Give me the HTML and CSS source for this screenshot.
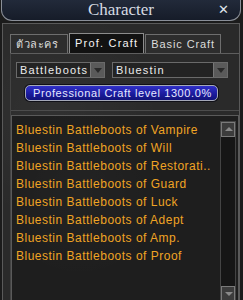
FILE: index.html
```html
<!DOCTYPE html>
<html lang="en">
<head>
  <meta charset="UTF-8" />
  <meta name="viewport" content="width=device-width, initial-scale=1" />
  <title>Character</title>
  <link rel="stylesheet" href="styles.css">
</head>
<body>
  <div class="window">
    <div class="titlebar">
      <span class="title">Character</span>
      <span class="close">&#x2715;</span>
    </div>

    <div class="frame">
      <div class="tabs">
        <div class="tab">ตัวละคร</div>
        <div class="tab active">Prof. Craft</div>
        <div class="tab">Basic Craft</div>
      </div>

      <div class="pane">
        <div class="selects">
          <div class="select small">
            <span>Battleboots</span>
            <span class="arrow"></span>
          </div>
          <div class="select wide">
            <span>Bluestin</span>
            <span class="arrow"></span>
          </div>
        </div>

        <div class="level">
          <span>Professional Craft level 1300.0%</span>
        </div>

        <div class="sep"></div>

        <div class="listbox">
          <ul class="items">
            <li>Bluestin Battleboots of Vampire</li>
            <li>Bluestin Battleboots of Will</li>
            <li>Bluestin Battleboots of Restorati..</li>
            <li>Bluestin Battleboots of Guard</li>
            <li>Bluestin Battleboots of Luck</li>
            <li>Bluestin Battleboots of Adept</li>
            <li>Bluestin Battleboots of Amp.</li>
            <li>Bluestin Battleboots of Proof</li>
          </ul>
          <div class="scrollbar">
            <div class="sbtn up"></div>
            <div class="track"></div>
            <div class="sbtn down"></div>
          </div>
        </div>
      </div>
    </div>
  </div>
</body>
</html>
```

FILE: styles.css
```css
body {
  margin: 0;
  background: #141414;
  font-family: 'Liberation Sans', Arial, sans-serif;
}
.window {
  width: 243px;
  height: 300px;
  overflow: hidden;
  background: #1b1b1b;
}
.titlebar {
  position: relative;
  height: 20px;
  margin: 0 2px 0 1px;
  border: 1px solid #8a8f98;
  border-top: none;
  border-radius: 0 0 11px 11px;
  background: linear-gradient(#222a3a, #161c29);
  display: flex;
  justify-content: center;
  align-items: center;
}
.title {
  font-family: 'Liberation Serif', 'Times New Roman', serif;
  font-size: 17px;
  color: #d6dbe2;
}
.close {
  position: absolute;
  right: 11px;
  top: 2px;
  font-size: 13px;
  color: #dfe3ea;
  font-family: 'DejaVu Sans', sans-serif;
}
.frame {
  margin: 2px 3px 0 2px;
  height: 280px;
  border: 1px solid #5a5a5a;
  border-bottom: none;
  background:
    radial-gradient(circle at 20% 30%, rgba(255,255,255,0.03), transparent 40%),
    radial-gradient(circle at 80% 70%, rgba(255,255,255,0.03), transparent 40%),
    #2a2a2a;
  padding-top: 9px;
}
.tabs {
  display: flex;
  gap: 1px;
  padding-left: 7px;
  align-items: flex-end;
}
.tab {
  height: 18px;
  padding: 0 5px;
  border: 1px solid #6e6e6e;
  border-bottom: none;
  background: #2d2d2d;
  color: #dcdcdc;
  font-size: 11px;
  letter-spacing: 0.9px;
  line-height: 19px;
}
.tab:first-child {
  width: 46px;
  letter-spacing: 0.5px;
}
.tab.active {
  height: 19px;
  background: #121212;
  border-color: #8c8c8c;
  color: #f4f4f4;
  letter-spacing: 1.2px;
}
.pane {
  margin: 0 0 0 7px;
  border-top: 1px solid #5e5e5e;
  border-left: 1px solid #444;
}
.selects {
  display: flex;
  gap: 7px;
  padding: 8px 0 0 5px;
}
.select {
  height: 14px;
  border: 1px solid #6a6a6a;
  background: #232323;
  color: #ececec;
  font-size: 11px;
  letter-spacing: 1.2px;
  line-height: 15px;
  padding-left: 3px;
  display: flex;
  justify-content: space-between;
}
.select.small { width: 84px; }
.select.wide { width: 111px; }
.arrow {
  width: 13px;
  height: 14px;
  background: #5a5a5a;
  border-left: 1px solid #777;
  position: relative;
}
.arrow::after {
  content: "";
  position: absolute;
  left: 3px;
  top: 5px;
  border-left: 4px solid transparent;
  border-right: 4px solid transparent;
  border-top: 5px solid #2a2a2a;
}
.level {
  margin: 7px 0 0 14px;
  width: 184px;
  height: 14px;
  border: 1px solid #a4a8b8;
  border-radius: 5px;
  background: linear-gradient(#3030c8, #1a1a9a 60%, #12127a);
  box-shadow: 0 0 0 1px #101018;
  color: #e6e8ff;
  font-size: 11px;
  letter-spacing: 0.6px;
  line-height: 15px;
  padding-left: 7px;
  white-space: nowrap;
  overflow: hidden;
}
.sep {
  margin: 9px 0 0 0;
  border-top: 1px solid #4c4c4c;
}
.listbox {
  margin: 4px 0 0 0;
  height: 190px;
  border: 1px solid #5a5a5a;
  border-bottom: none;
  background:
    radial-gradient(circle at 30% 40%, rgba(255,255,255,0.025), transparent 45%),
    #1e1e1e;
  display: flex;
}
.items {
  flex: 1;
  min-width: 0;
  overflow: hidden;
  list-style: none;
  margin: 0;
  padding: 5px 0 0 4px;
}
.items li {
  height: 18px;
  line-height: 18px;
  color: #f0a424;
  font-size: 12px;
  letter-spacing: 0.5px;
  white-space: nowrap;
}
.scrollbar {
  flex-shrink: 0;
  width: 14px;
  margin: 5px 2px 4px 0;
  display: flex;
  flex-direction: column;
  border: 1px solid #444;
  background: #161616;
}
.track { flex: 1; }
.sbtn {
  height: 13px;
  background: #3c3c3c;
  border: 1px solid #7a7a7a;
  position: relative;
}
.sbtn.up::after, .sbtn.down::after {
  content: "";
  position: absolute;
  left: 3px;
  border-left: 4px solid transparent;
  border-right: 4px solid transparent;
}
.sbtn.up::after {
  top: 4px;
  border-bottom: 4px solid #8a8a8a;
}
.sbtn.down::after {
  top: 5px;
  border-top: 4px solid #8a8a8a;
}
```
